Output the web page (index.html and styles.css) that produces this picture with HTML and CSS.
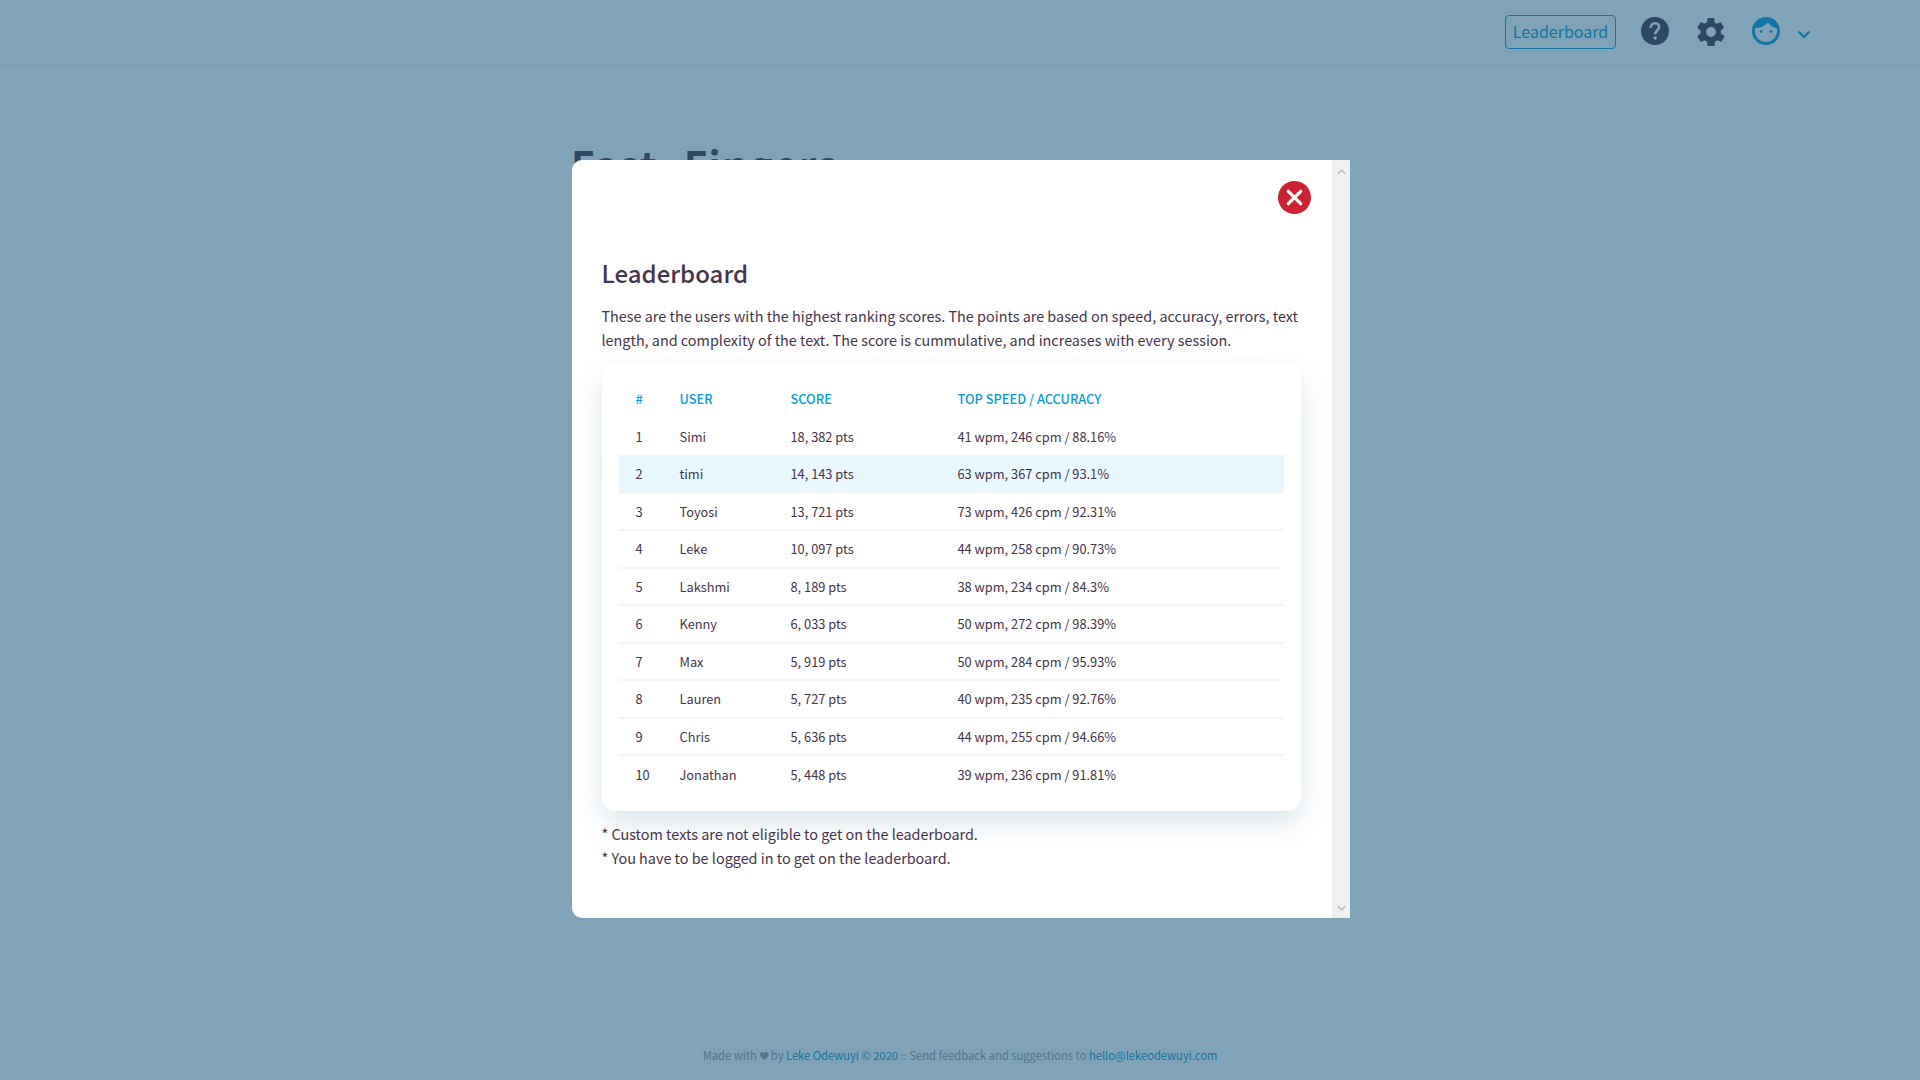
FILE: index.html
```html
<!DOCTYPE html>
<html lang="en">
<head>
<meta charset="utf-8">
<title>Leaderboard</title>
<link rel="stylesheet" href="styles.css">
</head>
<body>
<div class="page">
  <header class="topbar">
    <a class="lb-btn">Leaderboard</a>
    <svg class="ico ico-help" viewBox="0 0 28 28"><circle cx="14" cy="14" r="14" fill="#46344a"/><path d="M9.800 10.700C9.800 8 11.700 6.300 14 6.300 16.500 6.300 18.200 7.900 18.200 10 18.200 13.100 14.300 13.300 14.300 17.200" fill="none" stroke="#fff" stroke-width="2.600"/><circle cx="14.200" cy="21" r="1.700" fill="#fff"/></svg>
    <svg class="ico ico-gear" viewBox="-1 0 24 24"><path fill="#46344a" fill-rule="evenodd" d="M19.400 13.200c.05-.4.08-.8.08-1.200s-.03-.8-.08-1.200l2.500-2c.23-.18.290-.5.140-.76l-2.400-4.150c-.14-.26-.46-.35-.72-.26l-3 1.200c-.62-.47-1.290-.87-2.030-1.170L13.940.5A.58.58 0 0 0 13.350 0h-4.700a.58.58 0 0 0-.59.5l-.45 3.160c-.74.3-1.410.7-2.030 1.170l-3-1.200c-.26-.09-.58 0-.72.26L-.54 8.040c-.15.26-.09.58.14.76l2.500 2c-.05.4-.1.800-.1 1.200s.05.8.1 1.200l-2.500 2c-.23.18-.29.500-.14.760l2.400 4.150c.14.26.46.35.72.260l3-1.200c.62.470 1.290.870 2.030 1.170l.45 3.160c.04.29.3.5.59.5h4.700c.29 0 .55-.21.59-.5l.45-3.160c.74-.3 1.410-.7 2.030-1.170l3 1.200c.26.09.58 0 .72-.26l2.400-4.150c.15-.26.090-.58-.14-.76zM11 16.200a4.200 4.200 0 1 1 0-8.400 4.200 4.200 0 0 1 0 8.400z"/></svg>
    <svg class="ico ico-face" viewBox="0 0 28 28"><circle cx="14" cy="14" r="12.500" fill="none" stroke="#0a9ad8" stroke-width="3"/><path d="M2.500 11A12 12 0 0 1 25.500 11C21.500 11 18 9 16 5.500 13 9 8 11 2.500 11z" fill="#0a9ad8"/><circle cx="9" cy="14.500" r="1.400" fill="#0a9ad8"/><circle cx="19" cy="14.500" r="1.400" fill="#0a9ad8"/></svg>
    <svg class="ico-chev" viewBox="0 0 14 9"><path d="M1.500 1.500 7 7l5.500-5.500" fill="none" stroke="#0a9ad8" stroke-width="2.200"/></svg>
  </header>
  <main class="behind"><h1 class="behind-title">Fast Fingers</h1></main>
  <footer class="footer">Made with <span class="heart">♥</span> by <a>Leke Odewuyi © 2020</a> :: Send feedback and suggestions to <a>hello@lekeodewuyi.com</a></footer>

  <div class="overlay"></div>
  <section class="modal">
    <div class="modal-body">
      <div class="close-row">
        <button class="close" aria-label="Close"><svg viewBox="0 0 32 32"><circle cx="16" cy="16" r="16" fill="#cc2233"/><path d="M10 10l12 12M22 10 10 22" stroke="#fff" stroke-width="3.200" stroke-linecap="round"/></svg></button>
      </div>
      <h2 class="title">Leaderboard</h2>
      <p class="intro">These are the users with the highest ranking scores. The points are based on speed, accuracy, errors, text length, and complexity of the text. The score is cummulative, and increases with every session.</p>
      <div class="card">
        <table class="board">
          <thead><tr><th class="c1">#</th><th class="c2">USER</th><th class="c3">SCORE</th><th>TOP SPEED / ACCURACY</th></tr></thead>
          <tbody>
            <tr><td>1</td><td>Simi</td><td>18, 382 pts</td><td>41 wpm, 246 cpm / 88.16%</td></tr>
            <tr class="hl"><td>2</td><td>timi</td><td>14, 143 pts</td><td>63 wpm, 367 cpm / 93.1%</td></tr>
            <tr><td>3</td><td>Toyosi</td><td>13, 721 pts</td><td>73 wpm, 426 cpm / 92.31%</td></tr>
            <tr><td>4</td><td>Leke</td><td>10, 097 pts</td><td>44 wpm, 258 cpm / 90.73%</td></tr>
            <tr><td>5</td><td>Lakshmi</td><td>8, 189 pts</td><td>38 wpm, 234 cpm / 84.3%</td></tr>
            <tr><td>6</td><td>Kenny</td><td>6, 033 pts</td><td>50 wpm, 272 cpm / 98.39%</td></tr>
            <tr><td>7</td><td>Max</td><td>5, 919 pts</td><td>50 wpm, 284 cpm / 95.93%</td></tr>
            <tr><td>8</td><td>Lauren</td><td>5, 727 pts</td><td>40 wpm, 235 cpm / 92.76%</td></tr>
            <tr><td>9</td><td>Chris</td><td>5, 636 pts</td><td>44 wpm, 255 cpm / 94.66%</td></tr>
            <tr><td>10</td><td>Jonathan</td><td>5, 448 pts</td><td>39 wpm, 236 cpm / 91.81%</td></tr>
          </tbody>
        </table>
      </div>
      <p class="note first">* Custom texts are not eligible to get on the leaderboard.</p>
      <p class="note">* You have to be logged in to get on the leaderboard.</p>
    </div>
    <div class="scrollbar">
      <svg viewBox="0 0 10 6"><path d="M1 5l4-4 4 4" fill="none" stroke="#b5b5b5" stroke-width="1.400"/></svg>
      <svg viewBox="0 0 10 6"><path d="M1 1l4 4 4-4" fill="none" stroke="#b5b5b5" stroke-width="1.400"/></svg>
    </div>
  </section>
</div>
</body>
</html>
```
FILE: styles.css
```css
* { box-sizing: border-box; }
html, body { margin: 0; height: 100%; }
body {
  font-family: "Noto Sans CJK SC", "Noto Sans", sans-serif;
  color: #46344a;
  background: #fff;
  overflow: hidden;
}
.page { position: relative; width: 1920px; height: 1080px; display: flex; flex-direction: column; background: #fff; }
.topbar {
  height: 64px; display: flex; align-items: center; padding-right: 109px; justify-content: flex-end;
  background: #fff; box-shadow: 0 1px 4px rgba(0,0,0,.1);
}
.lb-btn {
  width: 111px; height: 34px; border: 1px solid #0a9ad8; border-radius: 4px;
  color: #0a9ad8; font-size: 16px; line-height: 31px; text-align: center; margin-right: 25px;
}
.ico { width: 28px; height: 28px; display: block; }
.ico-help { margin-right: 28px; margin-top: -2px; }
.ico-gear { margin-right: 27px; margin-top: -1px; }
.ico-face { margin-right: 17px; margin-top: -2px; }
.ico-chev { width: 14px; height: 9px; margin-top: 5px; }
.behind { flex: 1; width: 778px; margin: 0 auto; padding-top: 70px; }
.behind-title { margin: 0; font-size: 40px; line-height: 60px; font-weight: 700; color: #46344a; letter-spacing: 1.500px; word-spacing: 15px; }
.footer { height: 40px; text-align: center; font-size: 11.200px; line-height: 30px; color: #9c9c9c; }
.footer a { color: #0a9ad8; }
.heart { font-size: 10px; letter-spacing: -1px; }
.overlay { position: absolute; inset: 0; background: rgba(25,87,124,.55); }
.modal {
  position: absolute; left: 571.500px; top: 160px; width: 778.500px; height: 758px;
  background: #fff; border-radius: 10px 0 0 10px; overflow: hidden; display: flex;
}
.modal-body { flex: 1; padding: 21px 21px 0 30px; min-width: 0; }
.close-row { display: flex; justify-content: flex-end; height: 32px; }
.close { width: 33px; height: 33px; padding: 0; border: 0; background: none; display: block; }
.close svg { width: 33px; height: 33px; display: block; }
.title { margin: 42px 0 0; font-size: 24px; line-height: 36px; font-weight: 500; color: #46344a; }
.intro { margin: 13px 10px 0 0; font-size: 14.400px; line-height: 24px; color: #46344a; }
.card {
  margin: 12px 10px 0 0; background: #fff; border-radius: 14px; padding: 16px 17px 18px;
  box-shadow: 0 12px 30px rgba(60,110,140,.18);
}
.board { width: 100%; border-collapse: collapse; font-size: 12.800px; color: #46344a; table-layout: fixed; }
.board th { text-align: left; font-weight: 500; color: #0a9ad8; height: 37.500px; padding: 0 0 0 17px; font-size: 12.800px; }
.board td { height: 37.500px; padding: 0 0 0 17px; border-top: 2px solid #f5f5f5; }
.board tbody tr:first-child td { border-top: 0; }
.board .hl td { background: #e9f7fe; border-top: 0; }
.c1 { width: 44px; }
.c2 { width: 111px; }
.c3 { width: 167px; }
.note { margin: 0; font-size: 14.400px; line-height: 24px; color: #46344a; }
.note.first { margin-top: 11px; }
.scrollbar { width: 18px; background: #f0f0f0; display: flex; flex-direction: column; justify-content: space-between; align-items: center; padding: 9px 0 7px; }
.scrollbar svg { width: 9px; height: 6px; display: block; }
```
